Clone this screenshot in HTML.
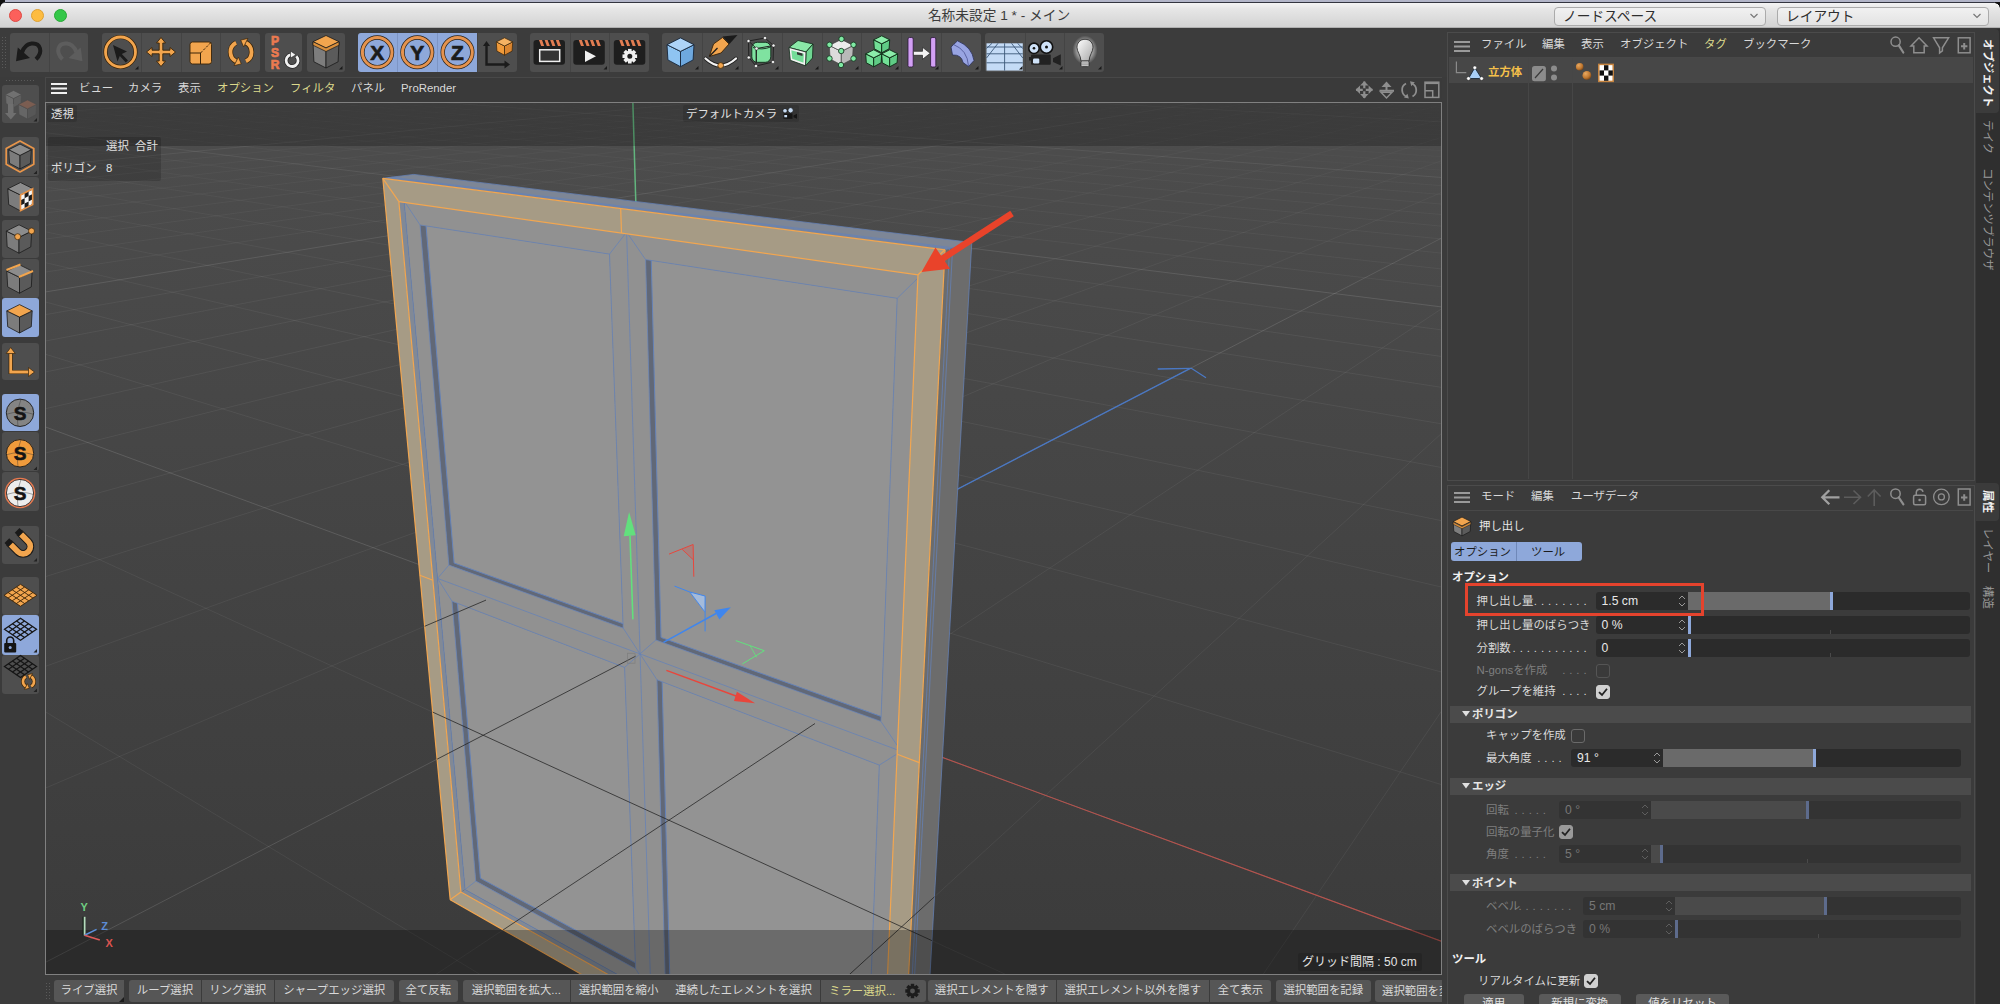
<!DOCTYPE html><html lang="ja"><head><meta charset="utf-8"><title>Cinema 4D</title><style>
*{box-sizing:border-box}
html,body{margin:0;padding:0}
body{width:2000px;height:1004px;overflow:hidden;background:#3b3b3b;position:relative;font-family:"Liberation Sans","Noto Sans CJK JP",sans-serif;font-size:11.4px;color:#d9d9d9;-webkit-font-smoothing:antialiased}
.abs{position:absolute}
.t{position:absolute;white-space:nowrap;line-height:16px;height:16px}
.tb{position:absolute;background:#4e4e4e;border-radius:3px}
.tbsep{position:absolute;width:1px;background:#444}
.hl{position:absolute;background:#8ea8da}
.y{color:#dcd98c}
.b{font-weight:bold;color:#f2f2f2}
.dis{color:#7f7f7f}
.fld{position:absolute;background:#2b2b2b;border-radius:3px 0 0 3px;height:18px;color:#e6e6e6;padding-left:6px;line-height:18px;font-size:12.2px}
.sld{position:absolute;background:#2b2b2b;height:18px;border-radius:0 3px 3px 0}
.fill{position:absolute;left:0;top:0;height:18px;background:#6a6a6a}
.hnd{position:absolute;top:0;width:3px;height:18px;background:#8ea8da}
.hdr{position:absolute;left:1450px;width:521px;height:17px;background:#4b4b4b}
.cb{position:absolute;width:14px;height:14px;border-radius:3px;border:1px solid #6a6a6a;background:#3a3a3a}
.cb.on{background:#d0d0d0;border-color:#d0d0d0}
.btn{position:absolute;background:#565656;height:22px;top:980px;line-height:21px;color:#d9d9d9;white-space:nowrap;text-align:center;overflow:hidden}
.vt{position:absolute;writing-mode:vertical-rl;text-orientation:sideways;white-space:nowrap;font-size:11.4px;line-height:25px;width:25px;color:#9a9a9a}
</style></head><body><div class="abs" style="left:0;top:0;width:2000px;height:4px;background:#b2b5c8"></div><div class="abs" style="left:0;top:1.8px;width:2000px;height:8px;background:#33353f;border-radius:6px 6px 0 0"></div><div class="abs" style="left:0;top:2.6px;width:2000px;height:25.4px;background:linear-gradient(#f4f4f4,#e6e6e6 25%,#d3d3d3);border-radius:5px 5px 0 0;border-bottom:1px solid #b0b0b0"></div><div class="abs" style="left:0;top:0;width:5px;height:7px;background:radial-gradient(circle at 5.5px 7.5px,transparent 5px,#101010 5.6px)"></div><div class="abs" style="left:1995px;top:1.5px;width:5px;height:6px;background:radial-gradient(circle at -0.5px 6.5px,transparent 5px,#101010 5.6px)"></div><div class="abs" style="left:9px;top:9px;width:13px;height:13px;border-radius:50%;background:#fc605b;border:0.5px solid #de4a43"></div><div class="abs" style="left:31.2px;top:9px;width:13px;height:13px;border-radius:50%;background:#fdbc40;border:0.5px solid #dea032"></div><div class="abs" style="left:53.8px;top:9px;width:13px;height:13px;border-radius:50%;background:#34c749;border:0.5px solid #27aa35"></div><div class="t" style="left:799px;width:400px;text-align:center;top:8.2px;font-size:13.7px;color:#3c3c3c">名称未設定 1 * - メイン</div><div class="abs" style="left:1554px;top:7px;width:212px;height:19px;border-radius:4px;background:linear-gradient(#f1f1f1,#e3e3e3);border:1px solid #ababab"></div><div class="t" style="left:1563px;top:8.5px;font-size:13.7px;color:#2e2e2e">ノードスペース</div><svg class="abs" style="left:1749px;top:12px" width="10" height="8"><path d="M1.5 2 L5 5.5 L8.5 2" fill="none" stroke="#777" stroke-width="1.2"/></svg><div class="abs" style="left:1777px;top:7px;width:212px;height:19px;border-radius:4px;background:linear-gradient(#f1f1f1,#e3e3e3);border:1px solid #ababab"></div><div class="t" style="left:1786px;top:8.5px;font-size:13.7px;color:#2e2e2e">レイアウト</div><svg class="abs" style="left:1972px;top:12px" width="10" height="8"><path d="M1.5 2 L5 5.5 L8.5 2" fill="none" stroke="#777" stroke-width="1.2"/></svg><div class="abs" style="left:0;top:29px;width:1447px;height:48px;background:#3c3c3c"></div><div class="abs" style="left:1px;top:36px;width:7px;height:32px;background-image:radial-gradient(circle,#5a5a5a 0.8px,transparent 1px);background-size:3px 3px"></div><div class="tb" style="left:10px;top:33px;width:78px;height:38.5px"></div><div class="tbsep" style="left:49px;top:33px;height:38.5px;background:#444"></div><div class="tb" style="left:101.7px;top:33px;width:158.3px;height:38.5px"></div><div class="tbsep" style="left:141.275px;top:33px;height:38.5px;background:#444"></div><div class="tbsep" style="left:180.85px;top:33px;height:38.5px;background:#444"></div><div class="tbsep" style="left:220.425px;top:33px;height:38.5px;background:#444"></div><div class="tb" style="left:264.6px;top:33px;width:37.8px;height:38.5px"></div><div class="tb" style="left:306.9px;top:33px;width:37.8px;height:38.5px"></div><div class="tb" style="left:357.5px;top:33px;width:159.8px;height:38.5px"></div><div class="hl" style="left:357.5px;top:33px;width:119.85px;height:38.5px;border-radius:3px 0 0 3px"></div><div class="tbsep" style="left:397.45px;top:33px;height:38.5px;background:#7d95c4"></div><div class="tbsep" style="left:437.4px;top:33px;height:38.5px;background:#7d95c4"></div><div class="tbsep" style="left:477.35px;top:33px;height:38.5px;background:#444"></div><div class="tb" style="left:530.3px;top:33px;width:118.3px;height:38.5px"></div><div class="tbsep" style="left:569.733px;top:33px;height:38.5px;background:#444"></div><div class="tbsep" style="left:609.167px;top:33px;height:38.5px;background:#444"></div><div class="tb" style="left:662px;top:33px;width:319px;height:38.5px"></div><div class="tbsep" style="left:701.875px;top:33px;height:38.5px;background:#444"></div><div class="tbsep" style="left:741.75px;top:33px;height:38.5px;background:#444"></div><div class="tbsep" style="left:781.625px;top:33px;height:38.5px;background:#444"></div><div class="tbsep" style="left:821.5px;top:33px;height:38.5px;background:#444"></div><div class="tbsep" style="left:861.375px;top:33px;height:38.5px;background:#444"></div><div class="tbsep" style="left:901.25px;top:33px;height:38.5px;background:#444"></div><div class="tbsep" style="left:941.125px;top:33px;height:38.5px;background:#444"></div><div class="tb" style="left:985px;top:33px;width:119px;height:38.5px"></div><div class="tbsep" style="left:1024.67px;top:33px;height:38.5px;background:#444"></div><div class="tbsep" style="left:1064.33px;top:33px;height:38.5px;background:#444"></div><svg class="abs" style="left:0;top:0" width="1447" height="78" viewBox="0 0 1447 78"><path d="M36 59.3 C43.5 52 40.5 42.5 31.5 43.5 C26.5 44 23.5 48 22 52.5" fill="none" stroke="#1b1b1b" stroke-width="4"/><polygon points="17.8,47.5 16,61.2 30,58" fill="#1b1b1b"/><path d="M62.5 59.3 C55 52 58 42.5 67 43.5 C72 44 75 48 76.5 52.5" fill="none" stroke="#5d5d5d" stroke-width="4"/><polygon points="80.7,47.5 82.5,61.2 68.5,58" fill="#5d5d5d"/><circle cx="120.5" cy="52" r="15" fill="none" stroke="#3a2408" stroke-width="4.2"/><circle cx="120.5" cy="52" r="15" fill="none" stroke="#f2a54e" stroke-width="2.8"/><polygon points="113,45 127,51.5 121.8,54 128,60.5 125.8,62.5 119.8,56 117.5,61.5" fill="#1b1b1b"/><path d="M138.5 69.5 L138.5 66 L135 69.5 Z" fill="#1a1a1a"/><path d="M161 37.5 L165.5 43 L162.8 43 L162.8 50.2 L170 50.2 L170 47.5 L175.5 52 L170 56.5 L170 53.8 L162.8 53.8 L162.8 61 L165.5 61 L161 66.5 L156.5 61 L159.2 61 L159.2 53.8 L152 53.8 L152 56.5 L146.5 52 L152 47.5 L152 50.2 L159.2 50.2 L159.2 43 L156.5 43 Z" fill="#f2a54e" stroke="#3a2408" stroke-width="0.9" stroke-linejoin="round"/><rect x="190" y="42" width="21.5" height="22" rx="2.5" fill="#f2a54e" stroke="#3a2408" stroke-width="0.9"/><path d="M190 53 L200.5 53 L200.5 64" fill="none" stroke="#3a2408" stroke-width="1"/><path d="M200.5 53 L211 42.5" stroke="#3a2408" stroke-width="1" stroke-dasharray="2.5 1.5"/><g transform="translate(482 0) scale(-1 1)"><path d="M245.9 42.7 A10.5 10.5 0 0 1 245.8 61.4" fill="none" stroke="#3a2408" stroke-width="5.2"/><path d="M245.9 42.7 A10.5 10.5 0 0 1 245.8 61.4" fill="none" stroke="#f2a54e" stroke-width="3.8"/><polygon points="247.9,65.6 243.6,57.1 240.7,63.9" fill="#f2a54e" stroke="#3a2408" stroke-width="0.7" stroke-linejoin="round"/><path d="M236.1 61.3 A10.5 10.5 0 0 1 236.2 42.6" fill="none" stroke="#3a2408" stroke-width="5.2"/><path d="M236.1 61.3 A10.5 10.5 0 0 1 236.2 42.6" fill="none" stroke="#f2a54e" stroke-width="3.8"/><polygon points="234.1,38.4 238.4,46.9 241.3,40.1" fill="#f2a54e" stroke="#3a2408" stroke-width="0.7" stroke-linejoin="round"/></g><text x="275" y="45" font-family="Liberation Sans,sans-serif" font-weight="bold" font-size="12" text-anchor="middle" fill="#ec7a50" stroke="#ec7a50" stroke-width="0.7">P</text><text x="275" y="57" font-family="Liberation Sans,sans-serif" font-weight="bold" font-size="12" text-anchor="middle" fill="#ec7a50" stroke="#ec7a50" stroke-width="0.7">S</text><text x="275" y="69" font-family="Liberation Sans,sans-serif" font-weight="bold" font-size="12" text-anchor="middle" fill="#ec7a50" stroke="#ec7a50" stroke-width="0.7">R</text><path d="M296.3 56.2 A6 6 0 1 1 291 54.6" fill="none" stroke="#222" stroke-width="4.2"/><path d="M296.3 56.2 A6 6 0 1 1 291 54.6" fill="none" stroke="#f2f2f2" stroke-width="2.8"/><polygon points="290.5,51 296,54.8 290.5,58" fill="#f2f2f2" stroke="#222" stroke-width="0.6"/><polygon points="313.0,41.7 326.0,48.0 326.0,68.0 313.9,61.8" fill="#7d7d7d" stroke="#1a1a1a" stroke-width="0.8" stroke-linejoin="round"/><polygon points="326.0,48.0 339.0,41.7 338.1,61.8 326.0,68.0" fill="#5b5b5b" stroke="#1a1a1a" stroke-width="0.8" stroke-linejoin="round"/><polygon points="326.0,35.5 339.0,41.7 326.0,48.0 313.0,41.7" fill="#f2a54e" stroke="#1a1a1a" stroke-width="0.8" stroke-linejoin="round"/><polygon points="313,41.74 326,47.98 339,41.74 339,45.2 326,51.5 313,45.2" fill="#d98f3c" stroke="#1a1a1a" stroke-width="0.7"/><path d="M342.5 69.5 L342.5 66 L339 69.5 Z" fill="#1a1a1a"/><circle cx="377.2" cy="52.3" r="14.8" fill="none" stroke="#2b2218" stroke-width="4.4"/><circle cx="377.2" cy="52.3" r="14.8" fill="none" stroke="#e4934f" stroke-width="3"/><text x="377.2" y="60.2" font-family="Liberation Sans,sans-serif" font-weight="bold" font-size="21" text-anchor="middle" fill="#1b1b1b" stroke="#1b1b1b" stroke-width="0.7">X</text><circle cx="417.3" cy="52.3" r="14.8" fill="none" stroke="#2b2218" stroke-width="4.4"/><circle cx="417.3" cy="52.3" r="14.8" fill="none" stroke="#e4934f" stroke-width="3"/><text x="417.3" y="60.2" font-family="Liberation Sans,sans-serif" font-weight="bold" font-size="21" text-anchor="middle" fill="#1b1b1b" stroke="#1b1b1b" stroke-width="0.7">Y</text><circle cx="457.5" cy="52.3" r="14.8" fill="none" stroke="#2b2218" stroke-width="4.4"/><circle cx="457.5" cy="52.3" r="14.8" fill="none" stroke="#e4934f" stroke-width="3"/><text x="457.5" y="60.2" font-family="Liberation Sans,sans-serif" font-weight="bold" font-size="21" text-anchor="middle" fill="#1b1b1b" stroke="#1b1b1b" stroke-width="0.7">Z</text><path d="M486.5 44 L486.5 64.5 L506 64.5" fill="none" stroke="#1b1b1b" stroke-width="2.4"/><polygon points="483,46 486.5,41 490,46" fill="#1b1b1b"/><polygon points="504.5,60.5 510,64.5 504.5,68.5" fill="#1b1b1b"/><polygon points="496.3,41.9 504.5,46.0 504.5,55.2 496.9,51.1" fill="#f09a3a" stroke="#3a2408" stroke-width="0.7" stroke-linejoin="round"/><polygon points="504.5,46.0 512.7,41.9 512.1,51.1 504.5,55.2" fill="#dc8630" stroke="#3a2408" stroke-width="0.7" stroke-linejoin="round"/><polygon points="504.5,37.8 512.7,41.9 504.5,46.0 496.3,41.9" fill="#f5b263" stroke="#3a2408" stroke-width="0.7" stroke-linejoin="round"/><rect x="533.5" y="40" width="31.5" height="24.8" rx="3" fill="#1e1e1e"/><polygon points="539,40 542,40 544.2,46 541.2,46" fill="#e27d52"/><polygon points="544.6,40 547.6,40 549.8,46 546.8,46" fill="#e27d52"/><polygon points="550.2,40 553.2,40 555.4,46 552.4,46" fill="#e27d52"/><polygon points="555.8,40 558.8,40 561,46 558,46" fill="#e27d52"/><rect x="573.3" y="40" width="31.5" height="24.8" rx="3" fill="#1e1e1e"/><polygon points="578.8,40 581.8,40 584,46 581,46" fill="#e27d52"/><polygon points="584.4,40 587.4,40 589.6,46 586.6,46" fill="#e27d52"/><polygon points="590,40 593,40 595.2,46 592.2,46" fill="#e27d52"/><polygon points="595.6,40 598.6,40 600.8,46 597.8,46" fill="#e27d52"/><rect x="613.8" y="40" width="31.5" height="24.8" rx="3" fill="#1e1e1e"/><polygon points="619.3,40 622.3,40 624.5,46 621.5,46" fill="#e27d52"/><polygon points="624.9,40 627.9,40 630.1,46 627.1,46" fill="#e27d52"/><polygon points="630.5,40 633.5,40 635.7,46 632.7,46" fill="#e27d52"/><polygon points="636.1,40 639.1,40 641.3,46 638.3,46" fill="#e27d52"/><rect x="539.7" y="49.8" width="20" height="11.6" fill="#333" stroke="#f0f0f0" stroke-width="1.5"/><polygon points="585,50.5 585,62 596,56.2" fill="#f0f0f0"/><path d="M607 69.5 L607 66 L603.5 69.5 Z" fill="#1a1a1a"/><rect x="-1.8" y="-7.3" width="3.6" height="4" fill="#f0f0f0" transform="translate(629.8 56.2) rotate(0)"/><rect x="-1.8" y="-7.3" width="3.6" height="4" fill="#f0f0f0" transform="translate(629.8 56.2) rotate(45)"/><rect x="-1.8" y="-7.3" width="3.6" height="4" fill="#f0f0f0" transform="translate(629.8 56.2) rotate(90)"/><rect x="-1.8" y="-7.3" width="3.6" height="4" fill="#f0f0f0" transform="translate(629.8 56.2) rotate(135)"/><rect x="-1.8" y="-7.3" width="3.6" height="4" fill="#f0f0f0" transform="translate(629.8 56.2) rotate(180)"/><rect x="-1.8" y="-7.3" width="3.6" height="4" fill="#f0f0f0" transform="translate(629.8 56.2) rotate(225)"/><rect x="-1.8" y="-7.3" width="3.6" height="4" fill="#f0f0f0" transform="translate(629.8 56.2) rotate(270)"/><rect x="-1.8" y="-7.3" width="3.6" height="4" fill="#f0f0f0" transform="translate(629.8 56.2) rotate(315)"/><circle cx="629.8" cy="56.2" r="4.1" fill="none" stroke="#f0f0f0" stroke-width="3.2"/><polygon points="667.0,44.7 680.5,51.4 680.5,66.7 667.9,59.9" fill="#8fc4f2" stroke="#16263a" stroke-width="0.9" stroke-linejoin="round"/><polygon points="680.5,51.4 694.0,44.7 693.1,59.9 680.5,66.7" fill="#6ea8de" stroke="#16263a" stroke-width="0.9" stroke-linejoin="round"/><polygon points="680.5,37.9 694.0,44.7 680.5,51.4 667.0,44.7" fill="#add3f7" stroke="#16263a" stroke-width="0.9" stroke-linejoin="round"/><path d="M698.5 69.5 L698.5 66 L695 69.5 Z" fill="#1a1a1a"/><polygon points="722.5,36.5 737.5,35 729.5,44 " fill="#1b1b1b"/><polygon points="713.5,44 722.5,37.5 729,44 721,53 709.3,56.5" fill="#f2a54e" stroke="#3a2408" stroke-width="0.9" stroke-linejoin="round"/><path d="M717.5 48 L709.5 56.3" stroke="#1b1b1b" stroke-width="1.3"/><path d="M705.5 58.5 Q720.5 72.5 736 58.5" fill="none" stroke="#222" stroke-width="3.8" stroke-linecap="round"/><path d="M705.5 58.5 Q720.5 72.5 736 58.5" fill="none" stroke="#f4f4f4" stroke-width="2.3" stroke-linecap="round"/><circle cx="720.7" cy="65.5" r="2.9" fill="#f2a54e" stroke="#3a2408" stroke-width="0.8"/><path d="M738.5 69.5 L738.5 66 L735 69.5 Z" fill="#1a1a1a"/><rect x="751.8" y="42.3" width="19" height="20" rx="5.5" fill="#7fe2a0" stroke="#0f2a18" stroke-width="0.9"/><path d="M753 47.5 Q762 50.5 770.5 47" fill="none" stroke="#0f2a18" stroke-width="0.9"/><path d="M756 49 L756.5 62" fill="none" stroke="#0f2a18" stroke-width="0.9"/><polygon points="748.5,41 765,38 773.5,45.5 773,62 756,66 748.8,57.5" fill="none" stroke="#222" stroke-width="1"/><path d="M748.5 41 L756.5 48.5 L773.5 45.5 M756.5 48.5 L756 66" fill="none" stroke="#222" stroke-width="1"/><circle cx="748.5" cy="41" r="1.6" fill="#f4f4f4" stroke="#222" stroke-width="0.5"/><circle cx="765" cy="38" r="1.6" fill="#f4f4f4" stroke="#222" stroke-width="0.5"/><circle cx="773.5" cy="45.5" r="1.6" fill="#f4f4f4" stroke="#222" stroke-width="0.5"/><circle cx="773" cy="62" r="1.6" fill="#f4f4f4" stroke="#222" stroke-width="0.5"/><circle cx="756" cy="66" r="1.6" fill="#f4f4f4" stroke="#222" stroke-width="0.5"/><circle cx="748.8" cy="57.5" r="1.6" fill="#f4f4f4" stroke="#222" stroke-width="0.5"/><circle cx="756.5" cy="48.5" r="1.6" fill="#f4f4f4" stroke="#222" stroke-width="0.5"/><path d="M778.5 69.5 L778.5 66 L775 69.5 Z" fill="#1a1a1a"/><polygon points="789,47.5 798,40.5 813,44 806,52" fill="#8ae8a8" stroke="#0f2a18" stroke-width="0.8"/><polygon points="806,52 813,44 812.5,58 805.5,65.8" fill="#6fd692" stroke="#0f2a18" stroke-width="0.8"/><polygon points="789,47.5 806,52 805.5,65.8 790.3,60.3" fill="#f2f2f2" stroke="#0f2a18" stroke-width="0.8"/><polygon points="791.3,50.3 803.8,53.7 803.5,62.8 792.2,58.8" fill="#74dc98"/><polygon points="797,52 802.5,53.5 802.5,56 797,54.5" fill="#333"/><path d="M818.5 69.5 L818.5 66 L815 69.5 Z" fill="#1a1a1a"/><polygon points="829.3,45.4 841.3,51.4 841.3,65.0 830.1,59.0" fill="#dcdcdc" stroke="#444" stroke-width="0.7" stroke-linejoin="round"/><polygon points="841.3,51.4 853.3,45.4 852.5,59.0 841.3,65.0" fill="#b9b9b9" stroke="#444" stroke-width="0.7" stroke-linejoin="round"/><polygon points="841.3,39.4 853.3,45.4 841.3,51.4 829.3,45.4" fill="#ececec" stroke="#444" stroke-width="0.7" stroke-linejoin="round"/><circle cx="841.5" cy="39" r="2.7" fill="#7fe9a3" stroke="#0f2a18" stroke-width="0.8"/><circle cx="829.5" cy="44.8" r="2.7" fill="#7fe9a3" stroke="#0f2a18" stroke-width="0.8"/><circle cx="853.5" cy="44.8" r="2.7" fill="#7fe9a3" stroke="#0f2a18" stroke-width="0.8"/><circle cx="841.2" cy="51" r="2.7" fill="#7fe9a3" stroke="#0f2a18" stroke-width="0.8"/><circle cx="829.5" cy="58.5" r="2.7" fill="#7fe9a3" stroke="#0f2a18" stroke-width="0.8"/><circle cx="853.5" cy="58.5" r="2.7" fill="#7fe9a3" stroke="#0f2a18" stroke-width="0.8"/><circle cx="841" cy="65" r="2.7" fill="#7fe9a3" stroke="#0f2a18" stroke-width="0.8"/><path d="M858.5 69.5 L858.5 66 L855 69.5 Z" fill="#1a1a1a"/><polygon points="873.7,39.8 881.7,43.8 881.7,52.8 874.3,48.8" fill="#72df96" stroke="#0c2a14" stroke-width="0.9" stroke-linejoin="round"/><polygon points="881.7,43.8 889.7,39.8 889.1,48.8 881.7,52.8" fill="#5fcc85" stroke="#0c2a14" stroke-width="0.9" stroke-linejoin="round"/><polygon points="881.7,35.8 889.7,39.8 881.7,43.8 873.7,39.8" fill="#8bedaa" stroke="#0c2a14" stroke-width="0.9" stroke-linejoin="round"/><polygon points="865.7,53.8 873.7,57.8 873.7,66.8 866.3,62.8" fill="#72df96" stroke="#0c2a14" stroke-width="0.9" stroke-linejoin="round"/><polygon points="873.7,57.8 881.7,53.8 881.1,62.8 873.7,66.8" fill="#5fcc85" stroke="#0c2a14" stroke-width="0.9" stroke-linejoin="round"/><polygon points="873.7,49.8 881.7,53.8 873.7,57.8 865.7,53.8" fill="#8bedaa" stroke="#0c2a14" stroke-width="0.9" stroke-linejoin="round"/><polygon points="881.7,53.8 889.7,57.8 889.7,66.8 882.3,62.8" fill="#72df96" stroke="#0c2a14" stroke-width="0.9" stroke-linejoin="round"/><polygon points="889.7,57.8 897.7,53.8 897.1,62.8 889.7,66.8" fill="#5fcc85" stroke="#0c2a14" stroke-width="0.9" stroke-linejoin="round"/><polygon points="889.7,49.8 897.7,53.8 889.7,57.8 881.7,53.8" fill="#8bedaa" stroke="#0c2a14" stroke-width="0.9" stroke-linejoin="round"/><path d="M898.5 69.5 L898.5 66 L895 69.5 Z" fill="#1a1a1a"/><rect x="908" y="37.5" width="5.2" height="29.5" rx="1.5" fill="#d3a0f5" stroke="#2a1838" stroke-width="0.8"/><rect x="930.6" y="37.5" width="5.2" height="29.5" rx="1.5" fill="#d3a0f5" stroke="#2a1838" stroke-width="0.8"/><polygon points="913.4,51.3 922.5,51.3 922.5,47.3 930.2,53.3 922.5,59.3 922.5,55.3 913.4,55.3" fill="#f2f2f2" stroke="#222" stroke-width="0.7"/><path d="M938.5 69.5 L938.5 66 L935 69.5 Z" fill="#1a1a1a"/><path d="M951 47 L957.5 40.8 Q972 47 974 60.5 L968.5 66.5 L963 62.5 Q961.5 54.5 952.5 55 Z" fill="#98a4e2" stroke="#2a2f55" stroke-width="0.8" stroke-linejoin="round"/><path d="M953.5 44.5 Q967.5 50 968.5 66" fill="none" stroke="#4a5290" stroke-width="0.8"/><path d="M978.5 69.5 L978.5 66 L975 69.5 Z" fill="#1a1a1a"/><rect x="986.5" y="43.3" width="36.3" height="27.3" fill="#c4dbf6"/><path d="M986.5 47 H1022.8 M986.5 53.8 H1022.8 M986.5 62.8 H1022.8 M1004.6 43.3 V70.6 M998 43.3 L986.5 58 M1011.5 43.3 L1022.8 58 M992 43.3 L986.5 48.5 M1017.5 43.3 L1022.8 48.5" fill="none" stroke="#3c5878" stroke-width="0.9"/><path d="M1022.5 69.5 L1022.5 66 L1019 69.5 Z" fill="#1a1a1a"/><rect x="1031" y="54.5" width="19.8" height="10.3" rx="1" fill="#222"/><rect x="1029" y="57" width="3" height="3.5" fill="#222"/><polygon points="1053,58.3 1060.8,54.3 1060.8,65.6 1053,62" fill="#222"/><circle cx="1034" cy="48.3" r="5.2" fill="#cfe2f8" stroke="#111" stroke-width="1.6"/><circle cx="1034" cy="48.3" r="1.3" fill="#111"/><circle cx="1046.5" cy="47" r="6.2" fill="#cfe2f8" stroke="#111" stroke-width="1.6"/><circle cx="1046.5" cy="47" r="1.5" fill="#111"/><rect x="1033" y="58.5" width="6.3" height="5" rx="1.2" fill="#cfe2f8"/><path d="M1062.5 69.5 L1062.5 66 L1059 69.5 Z" fill="#1a1a1a"/><defs><radialGradient id="glow"><stop offset="0.55" stop-color="#fff" stop-opacity="0.55"/><stop offset="1" stop-color="#fff" stop-opacity="0"/></radialGradient><linearGradient id="bulbg" x1="0" y1="0" x2="1" y2="1"><stop offset="0" stop-color="#fff"/><stop offset="1" stop-color="#a8a8a8"/></linearGradient></defs><ellipse cx="1085" cy="50" rx="12.5" ry="14.5" fill="url(#glow)"/><path d="M1085 39.3 C1090.5 39.3 1093 43.5 1093 47.3 C1093 52 1089.3 55 1089 61 L1081 61 C1080.7 55 1077 52 1077 47.3 C1077 43.5 1079.5 39.3 1085 39.3 Z" fill="url(#bulbg)" stroke="#222" stroke-width="0.8"/><rect x="1081" y="61" width="8" height="5.6" rx="1.2" fill="#d8d8d8" stroke="#222" stroke-width="0.7"/><path d="M1081 63 H1089 M1081 64.8 H1089" stroke="#666" stroke-width="0.6"/><path d="M1101.5 69.5 L1101.5 66 L1098 69.5 Z" fill="#1a1a1a"/></svg><div class="abs" style="left:5px;top:79px;width:31px;height:4px;background-image:radial-gradient(circle,#5a5a5a 0.8px,transparent 1px);background-size:3px 3px"></div><div class="tb" style="left:1.5px;top:85px;width:37.5px;height:38px;"></div><div class="tb" style="left:1.5px;top:137.3px;width:37.5px;height:39.2px;"></div><div class="tb" style="left:1.5px;top:177px;width:37.5px;height:38.5px;"></div><div class="tb" style="left:1.5px;top:220px;width:37.5px;height:38px;"></div><div class="tb" style="left:1.5px;top:258.5px;width:37.5px;height:39px;"></div><div class="hl" style="left:1.5px;top:298px;width:37.5px;height:39.3px;border-radius:3px;"></div><div class="tb" style="left:1.5px;top:342.7px;width:37.5px;height:37.7px;"></div><div class="hl" style="left:1.5px;top:393.8px;width:37.5px;height:37.7px;border-radius:3px;"></div><div class="tb" style="left:1.5px;top:432px;width:37.5px;height:39px;"></div><div class="tb" style="left:1.5px;top:471.5px;width:37.5px;height:39.8px;"></div><div class="tb" style="left:1.5px;top:526px;width:37.5px;height:37.5px;"></div><div class="tb" style="left:1.5px;top:576.5px;width:37.5px;height:38.1px;"></div><div class="hl" style="left:1.5px;top:615px;width:37.5px;height:39.7px;border-radius:3px;"></div><div class="tb" style="left:1.5px;top:655px;width:37.5px;height:38.9px;"></div><svg class="abs" style="left:0;top:78px" width="44" height="640" viewBox="0 78 44 640"><g opacity="0.55"><polygon points="5.5,94.5 13.5,98.5 13.5,107.5 6.1,103.5" fill="#858585" stroke="#4a4a4a" stroke-width="0.6" stroke-linejoin="round"/><polygon points="13.5,98.5 21.5,94.5 20.9,103.5 13.5,107.5" fill="#6c6c6c" stroke="#4a4a4a" stroke-width="0.6" stroke-linejoin="round"/><polygon points="13.5,90.5 21.5,94.5 13.5,98.5 5.5,94.5" fill="#8f8f8f" stroke="#4a4a4a" stroke-width="0.6" stroke-linejoin="round"/><path d="M8 104 L13.5 104 L13.5 113 L16.5 113 L10.8 119.5 L5 113 L8 113 Z" fill="#8a8a8a"/><polygon points="18.5,104.4 27.5,108.9 27.5,119.1 19.1,114.6" fill="#7a7a7a" stroke="#4a4a4a" stroke-width="0.6" stroke-linejoin="round"/><polygon points="27.5,108.9 36.5,104.4 35.9,114.6 27.5,119.1" fill="#606060" stroke="#4a4a4a" stroke-width="0.6" stroke-linejoin="round"/><polygon points="27.5,99.9 36.5,104.4 27.5,108.9 18.5,104.4" fill="#a06a55" stroke="#4a4a4a" stroke-width="0.6" stroke-linejoin="round"/></g><path d="M37 121.5 L37 118 L33.5 121.5 Z" fill="#222"/><polygon points="8.7,149.7 20.0,155.4 20.0,168.9 9.5,163.3" fill="#7c7c7c" stroke="#1a1a1a" stroke-width="0.8" stroke-linejoin="round"/><polygon points="20.0,155.4 31.3,149.7 30.5,163.3 20.0,168.9" fill="#5a5a5a" stroke="#1a1a1a" stroke-width="0.8" stroke-linejoin="round"/><polygon points="20.0,144.1 31.3,149.7 20.0,155.4 8.7,149.7" fill="#8c8c8c" stroke="#1a1a1a" stroke-width="0.8" stroke-linejoin="round"/><polygon points="20,141 33.8,148.6 33.8,164.2 20,172 6.2,164.2 6.2,148.6" fill="none" stroke="#e8954a" stroke-width="1.7" stroke-linejoin="round"/><path d="M37 174 L37 170.5 L33.5 174 Z" fill="#222"/><polygon points="7.8,188.8 20.5,195.0 20.5,210.9 8.7,204.6" fill="#7c7c7c" stroke="#1a1a1a" stroke-width="0.8" stroke-linejoin="round"/><polygon points="20.5,195.0 33.2,188.8 32.3,204.6 20.5,210.9" fill="#f4f4f4" stroke="#1a1a1a" stroke-width="0.8" stroke-linejoin="round"/><polygon points="20.5,182.5 33.2,188.8 20.5,195.0 7.8,188.8" fill="#8c8c8c" stroke="#1a1a1a" stroke-width="0.8" stroke-linejoin="round"/><polygon points="20.5,200.3 24.6,198.2 24.6,203.5 20.5,205.5" fill="#1a1a1a"/><polygon points="24.6,192.9 28.6,190.9 28.6,196.1 24.6,198.2" fill="#1a1a1a"/><polygon points="24.6,203.5 28.6,201.4 28.6,206.7 24.6,208.7" fill="#1a1a1a"/><polygon points="28.6,196.1 32.7,194.1 32.7,199.3 28.6,201.4" fill="#1a1a1a"/><polygon points="20.5,195.0 32.7,188.8 32.7,204.6 20.5,210.8" fill="none" stroke="#e8954a" stroke-width="1.6"/><polygon points="6.3,231.1 19.0,237.3 19.0,253.2 7.2,246.9" fill="#7c7c7c" stroke="#1a1a1a" stroke-width="0.8" stroke-linejoin="round"/><polygon points="19.0,237.3 31.7,231.1 30.8,246.9 19.0,253.2" fill="#5a5a5a" stroke="#1a1a1a" stroke-width="0.8" stroke-linejoin="round"/><polygon points="19.0,224.8 31.7,231.1 19.0,237.3 6.3,231.1" fill="#8c8c8c" stroke="#1a1a1a" stroke-width="0.8" stroke-linejoin="round"/><circle cx="17.7" cy="236.7" r="3" fill="#f2a54e" stroke="#3a2408" stroke-width="0.7"/><circle cx="31.5" cy="231" r="3" fill="#f2a54e" stroke="#3a2408" stroke-width="0.7"/><polygon points="6.8,271.1 19.5,277.3 19.5,293.2 7.7,286.9" fill="#7c7c7c" stroke="#1a1a1a" stroke-width="0.8" stroke-linejoin="round"/><polygon points="19.5,277.3 32.2,271.1 31.3,286.9 19.5,293.2" fill="#5a5a5a" stroke="#1a1a1a" stroke-width="0.8" stroke-linejoin="round"/><polygon points="19.5,264.8 32.2,271.1 19.5,277.3 6.8,271.1" fill="#8c8c8c" stroke="#1a1a1a" stroke-width="0.8" stroke-linejoin="round"/><path d="M6.5 270 L20.5 264.5 M19 277 L33 271" stroke="#f2a54e" stroke-width="2"/><polygon points="6.8,310.9 19.5,317.1 19.5,333.0 7.7,326.7" fill="#7c7c7c" stroke="#1a1a1a" stroke-width="0.8" stroke-linejoin="round"/><polygon points="19.5,317.1 32.2,310.9 31.3,326.7 19.5,333.0" fill="#5a5a5a" stroke="#1a1a1a" stroke-width="0.8" stroke-linejoin="round"/><polygon points="19.5,304.6 32.2,310.9 19.5,317.1 6.8,310.9" fill="#f2a54e" stroke="#1a1a1a" stroke-width="0.8" stroke-linejoin="round"/><path d="M10.7 352 L10.7 372 L30 372" fill="none" stroke="#3a2408" stroke-width="4.2"/><path d="M10.7 352 L10.7 372 L30 372" fill="none" stroke="#f2a54e" stroke-width="2.8"/><polygon points="6.2,353.5 10.7,347.5 15.2,353.5" fill="#f2a54e" stroke="#3a2408" stroke-width="0.7"/><polygon points="28.5,367.5 34.5,372 28.5,376.5" fill="#f2a54e" stroke="#3a2408" stroke-width="0.7"/><circle cx="20" cy="412.8" r="13.7" fill="#848484" stroke="#1a1a1a" stroke-width="0.9"/><path d="M6.3 414.3 Q20 409.8 33.7 414.3 M21 399.1 Q16 412.8 18 426.5" fill="none" stroke="#333" stroke-opacity="0.6" stroke-width="0.7"/><text x="20" y="419.6" font-family="Liberation Sans,sans-serif" font-weight="bold" font-size="19" text-anchor="middle" fill="#141414" stroke="#141414" stroke-width="0.6">S</text><circle cx="20" cy="453.3" r="13.7" fill="#f09b3c" stroke="#1a1a1a" stroke-width="0.9"/><path d="M6.3 454.8 Q20 450.3 33.7 454.8 M21 439.6 Q16 453.3 18 467" fill="none" stroke="#333" stroke-opacity="0.6" stroke-width="0.7"/><text x="20" y="460.1" font-family="Liberation Sans,sans-serif" font-weight="bold" font-size="19" text-anchor="middle" fill="#141414" stroke="#141414" stroke-width="0.6">S</text><path d="M37 470 L37 466.5 L33.5 470 Z" fill="#222"/><circle cx="20" cy="493" r="15.3" fill="#e87a50"/><circle cx="20" cy="493" r="13.6" fill="#ececec" stroke="#1a1a1a" stroke-width="0.8"/><path d="M6.4 494.5 Q20 490 33.6 494.5 M21 479.4 Q16 493 18 506.6" fill="none" stroke="#333" stroke-opacity="0.6" stroke-width="0.7"/><text x="20" y="499.8" font-family="Liberation Sans,sans-serif" font-weight="bold" font-size="19" text-anchor="middle" fill="#141414" stroke="#141414" stroke-width="0.6">S</text><g transform="translate(21.5 545) rotate(-45) scale(1.12)"><path d="M-9.5 -9 L-9.5 2 A9.5 9.5 0 0 0 9.5 2 L9.5 -9 L3.5 -9 L3.5 2 A3.5 3.5 0 0 1 -3.5 2 L-3.5 -9 Z" fill="#f2a54e" stroke="#1a1a1a" stroke-width="0.9"/><rect x="-9.5" y="-12" width="6" height="5" fill="#1a1a1a"/><rect x="3.5" y="-12" width="6" height="5" fill="#1a1a1a"/></g><path d="M37 561.5 L37 558 L33.5 561.5 Z" fill="#222"/><polygon points="20.5,584.3 37,595.3 20.5,606.3 4,595.3" fill="#f2a54e" stroke="#3a2408" stroke-width="0.9"/><line x1="24.6" y1="587.0" x2="8.1" y2="598.0" stroke="#3a2408" stroke-width="0.9"/><line x1="16.4" y1="587.0" x2="32.9" y2="598.0" stroke="#3a2408" stroke-width="0.9"/><line x1="28.8" y1="589.8" x2="12.2" y2="600.8" stroke="#3a2408" stroke-width="0.9"/><line x1="12.2" y1="589.8" x2="28.8" y2="600.8" stroke="#3a2408" stroke-width="0.9"/><line x1="32.9" y1="592.5" x2="16.4" y2="603.5" stroke="#3a2408" stroke-width="0.9"/><line x1="8.1" y1="592.5" x2="24.6" y2="603.5" stroke="#3a2408" stroke-width="0.9"/><polygon points="20.5,618.2 36.5,629.2 20.5,640.2 4.5,629.2" fill="none" stroke="#151515" stroke-width="1.3"/><line x1="24.5" y1="621.0" x2="8.5" y2="632.0" stroke="#151515" stroke-width="1.3"/><line x1="16.5" y1="621.0" x2="32.5" y2="632.0" stroke="#151515" stroke-width="1.3"/><line x1="28.5" y1="623.7" x2="12.5" y2="634.7" stroke="#151515" stroke-width="1.3"/><line x1="12.5" y1="623.7" x2="28.5" y2="634.7" stroke="#151515" stroke-width="1.3"/><line x1="32.5" y1="626.5" x2="16.5" y2="637.5" stroke="#151515" stroke-width="1.3"/><line x1="8.5" y1="626.5" x2="24.5" y2="637.5" stroke="#151515" stroke-width="1.3"/><rect x="4.2" y="643" width="12" height="9.5" rx="1" fill="#151515"/><path d="M6.7 643 V640.5 A3.5 3.5 0 0 1 13.7 640.5 V643" fill="none" stroke="#151515" stroke-width="1.6"/><circle cx="10.2" cy="647.5" r="1.5" fill="#8ea8da"/><path d="M37 652.5 L37 649 L33.5 652.5 Z" fill="#222"/><polygon points="20.5,655.5 36.5,666.5 20.5,677.5 4.5,666.5" fill="none" stroke="#151515" stroke-width="1.3"/><line x1="24.5" y1="658.2" x2="8.5" y2="669.2" stroke="#151515" stroke-width="1.3"/><line x1="16.5" y1="658.2" x2="32.5" y2="669.2" stroke="#151515" stroke-width="1.3"/><line x1="28.5" y1="661.0" x2="12.5" y2="672.0" stroke="#151515" stroke-width="1.3"/><line x1="12.5" y1="661.0" x2="28.5" y2="672.0" stroke="#151515" stroke-width="1.3"/><line x1="32.5" y1="663.8" x2="16.5" y2="674.8" stroke="#151515" stroke-width="1.3"/><line x1="8.5" y1="663.8" x2="24.5" y2="674.8" stroke="#151515" stroke-width="1.3"/><g transform="translate(57 0) scale(-1 1)"><path d="M31.1 676.6 A5.6 5.6 0 0 1 31.0 686.5" fill="none" stroke="#3a2408" stroke-width="4"/><path d="M31.1 676.6 A5.6 5.6 0 0 1 31.0 686.5" fill="none" stroke="#f2a54e" stroke-width="2.6"/><polygon points="32.5,689.4 29.6,683.6 27.6,688.3" fill="#f2a54e" stroke="#3a2408" stroke-width="0.7" stroke-linejoin="round"/><path d="M25.9 686.4 A5.6 5.6 0 0 1 26.0 676.5" fill="none" stroke="#3a2408" stroke-width="4"/><path d="M25.9 686.4 A5.6 5.6 0 0 1 26.0 676.5" fill="none" stroke="#f2a54e" stroke-width="2.6"/><polygon points="24.5,673.6 27.4,679.4 29.4,674.7" fill="#f2a54e" stroke="#3a2408" stroke-width="0.7" stroke-linejoin="round"/></g><path d="M37 692 L37 688.5 L33.5 692 Z" fill="#222"/></svg><div class="abs" style="left:45px;top:77px;width:1397px;height:25px;background:#3a3a3a;border-top:1px solid #484848;border-left:1px solid #484848"></div><div class="abs" style="left:51px;top:83px;width:16px;height:2px;background:#f0f0f0;box-shadow:0 4.5px 0 #f0f0f0,0 9px 0 #f0f0f0"></div><div class="t " style="left:79px;top:80px;">ビュー</div><div class="t " style="left:128px;top:80px;">カメラ</div><div class="t " style="left:178px;top:80px;">表示</div><div class="t y" style="left:217px;top:80px;">オプション</div><div class="t y" style="left:290px;top:80px;">フィルタ</div><div class="t " style="left:351px;top:80px;">パネル</div><div class="t " style="left:401px;top:80px;">ProRender</div><svg class="abs" style="left:1350px;top:78px" width="96" height="24" viewBox="1350 78 96 24"><path d="M1364.3 81.6 v16.4 M1356.1 89.8 h16.4" stroke="#8e8e8e" stroke-width="2.2" fill="none"/><polygon points="1364.3,81.2 1368.5,85.5 1360.1,85.5" fill="#8e8e8e"/><polygon points="1364.3,98.4 1360.1,94.1 1368.5,94.1" fill="#8e8e8e"/><polygon points="1355.7,89.8 1360.0,85.6 1360.0,94.0" fill="#8e8e8e"/><polygon points="1372.9,89.8 1368.6,94.0 1368.6,85.6" fill="#8e8e8e"/><rect x="1362.8" y="88.3" width="3" height="3" fill="#3a3a3a"/><polygon points="1386.5,81.5 1391.5,87 1381.5,87" fill="#8e8e8e"/><path d="M1386.5 86 V90.5 M1379.5 90.7 H1394" stroke="#8e8e8e" stroke-width="2" fill="none"/><path d="M1381 92.3 L1392 92.3 L1386.5 98 Z" fill="none" stroke="#8e8e8e" stroke-width="1.5"/><path d="M1406 83.5 A7.3 7.3 0 0 0 1407.5 97" fill="none" stroke="#8e8e8e" stroke-width="1.8"/><path d="M1412.5 96.5 A7.3 7.3 0 0 0 1412 83.5" fill="none" stroke="#8e8e8e" stroke-width="1.8"/><polygon points="1410,81.3 1414.8,82.3 1411.3,86.2" fill="#8e8e8e"/><polygon points="1408.8,98.5 1404,97.6 1407.5,93.7" fill="#8e8e8e"/><rect x="1425" y="82.2" width="13.8" height="15.2" fill="none" stroke="#8e8e8e" stroke-width="1.5"/><path d="M1425 90.8 H1432.7 V97.4" fill="none" stroke="#8e8e8e" stroke-width="1.5"/><path d="M1425 83.3 H1438.8" stroke="#8e8e8e" stroke-width="1.6"/></svg><div class="abs" style="left:45px;top:102px;width:1397px;height:873px;background:#808080"></div><svg width="2000" height="1004" viewBox="0 0 2000 1004" style="position:absolute;left:0;top:0">
<defs><linearGradient id="vbg" x1="0" y1="0" x2="0" y2="1"><stop offset="0" stop-color="#4d4d4d"/><stop offset="1" stop-color="#3b3b3b"/></linearGradient>
<clipPath id="vclip"><rect x="46" y="103" width="1395" height="871"/></clipPath>
<clipPath id="doorclip"><polygon points="382.8,178.3 413.8,174.4 971.8,242.5 921.1,1131.0 899.6,1155.4 450.2,899.7"/></clipPath>
<clipPath id="opUL"><polygon points="420.1,225.0 609.5,254.1 623.2,628.1 448.9,565.1"/></clipPath>
<clipPath id="opUR"><polygon points="645.6,259.6 897.2,298.3 880.9,721.4 655.9,640.0"/></clipPath>
<clipPath id="opLL"><polygon points="452.0,601.2 624.6,667.4 635.6,968.8 475.8,881.1"/></clipPath>
<clipPath id="opLR"><polygon points="657.0,679.8 879.3,765.1 866.6,1095.6 665.4,985.2"/></clipPath>
<linearGradient id="gfade" x1="0" y1="103" x2="0" y2="330" gradientUnits="userSpaceOnUse"><stop offset="0" stop-color="#fff" stop-opacity="0.3"/><stop offset="0.25" stop-color="#fff" stop-opacity="0.55"/><stop offset="1" stop-color="#fff" stop-opacity="1"/></linearGradient><mask id="gmask" maskUnits="userSpaceOnUse" x="0" y="0" width="2000" height="1004"><rect x="0" y="0" width="2000" height="1004" fill="url(#gfade)"/></mask>
</defs>
<g clip-path="url(#vclip)">
<rect x="46" y="103" width="1395" height="871" fill="url(#vbg)"/>
<g stroke="#fff" stroke-width="1" mask="url(#gmask)"><line x1="44.0" y1="102.5" x2="66.8" y2="101.0" stroke-opacity="0.04"/><line x1="44.0" y1="105.7" x2="116.5" y2="101.0" stroke-opacity="0.04"/><line x1="44.0" y1="109.2" x2="166.1" y2="101.0" stroke-opacity="0.04"/><line x1="44.0" y1="112.9" x2="215.8" y2="101.0" stroke-opacity="0.13"/><line x1="44.0" y1="116.8" x2="265.5" y2="101.0" stroke-opacity="0.04"/><line x1="44.0" y1="120.9" x2="315.1" y2="101.0" stroke-opacity="0.04"/><line x1="44.0" y1="125.3" x2="364.8" y2="101.0" stroke-opacity="0.04"/><line x1="44.0" y1="130.0" x2="414.5" y2="101.0" stroke-opacity="0.04"/><line x1="44.0" y1="135.0" x2="464.1" y2="101.0" stroke-opacity="0.04"/><line x1="44.0" y1="140.4" x2="513.8" y2="101.0" stroke-opacity="0.04"/><line x1="44.0" y1="146.1" x2="563.5" y2="101.0" stroke-opacity="0.04"/><line x1="44.0" y1="152.3" x2="613.1" y2="101.0" stroke-opacity="0.04"/><line x1="44.0" y1="158.9" x2="662.8" y2="101.0" stroke-opacity="0.04"/><line x1="44.0" y1="166.1" x2="712.5" y2="101.0" stroke-opacity="0.13"/><line x1="44.0" y1="173.9" x2="762.1" y2="101.0" stroke-opacity="0.06"/><line x1="44.0" y1="182.4" x2="811.8" y2="101.0" stroke-opacity="0.06"/><line x1="44.0" y1="191.7" x2="861.5" y2="101.0" stroke-opacity="0.06"/><line x1="44.0" y1="201.9" x2="911.1" y2="101.0" stroke-opacity="0.06"/><line x1="44.0" y1="213.1" x2="960.8" y2="101.0" stroke-opacity="0.06"/><line x1="44.0" y1="225.5" x2="1010.5" y2="101.0" stroke-opacity="0.06"/><line x1="44.0" y1="239.3" x2="1060.1" y2="101.0" stroke-opacity="0.06"/><line x1="44.0" y1="254.8" x2="1109.8" y2="101.0" stroke-opacity="0.06"/><line x1="44.0" y1="272.3" x2="1159.5" y2="101.0" stroke-opacity="0.06"/><line x1="44.0" y1="292.2" x2="1209.1" y2="101.0" stroke-opacity="0.13"/><line x1="44.0" y1="314.9" x2="1258.8" y2="101.0" stroke-opacity="0.06"/><line x1="44.0" y1="341.3" x2="1308.4" y2="101.0" stroke-opacity="0.06"/><line x1="44.0" y1="372.3" x2="1358.1" y2="101.0" stroke-opacity="0.06"/><line x1="44.0" y1="409.0" x2="1407.8" y2="101.0" stroke-opacity="0.06"/><line x1="44.0" y1="453.4" x2="1443.0" y2="104.6" stroke-opacity="0.06"/><line x1="44.0" y1="508.1" x2="1443.0" y2="118.8" stroke-opacity="0.06"/><line x1="44.0" y1="577.1" x2="1443.0" y2="136.8" stroke-opacity="0.06"/><line x1="44.0" y1="666.9" x2="1443.0" y2="160.2" stroke-opacity="0.06"/><line x1="44.0" y1="710.9" x2="482.7" y2="976.0" stroke-opacity="0.06"/><line x1="44.0" y1="788.7" x2="1443.0" y2="191.9" stroke-opacity="0.06"/><line x1="44.0" y1="534.2" x2="1009.2" y2="976.0" stroke-opacity="0.06"/><line x1="44.0" y1="963.1" x2="1443.0" y2="237.3" stroke-opacity="0.13"/><line x1="44.0" y1="426.4" x2="1443.0" y2="941.8" stroke-opacity="0.13"/><line x1="433.5" y1="976.0" x2="1443.0" y2="307.8" stroke-opacity="0.06"/><line x1="44.0" y1="353.8" x2="1443.0" y2="785.1" stroke-opacity="0.06"/><line x1="847.8" y1="976.0" x2="1443.0" y2="432.0" stroke-opacity="0.06"/><line x1="44.0" y1="301.6" x2="1443.0" y2="672.4" stroke-opacity="0.06"/><line x1="1262.0" y1="976.0" x2="1443.0" y2="708.9" stroke-opacity="0.06"/><line x1="44.0" y1="262.3" x2="1443.0" y2="587.4" stroke-opacity="0.06"/><line x1="44.0" y1="231.5" x2="1443.0" y2="521.0" stroke-opacity="0.06"/><line x1="44.0" y1="206.9" x2="1443.0" y2="467.8" stroke-opacity="0.06"/><line x1="44.0" y1="186.6" x2="1443.0" y2="424.1" stroke-opacity="0.06"/><line x1="44.0" y1="169.7" x2="1443.0" y2="387.6" stroke-opacity="0.06"/><line x1="44.0" y1="155.4" x2="1443.0" y2="356.7" stroke-opacity="0.06"/><line x1="44.0" y1="143.1" x2="1443.0" y2="330.1" stroke-opacity="0.06"/><line x1="44.0" y1="132.5" x2="1443.0" y2="307.1" stroke-opacity="0.13"/><line x1="44.0" y1="123.1" x2="1443.0" y2="286.9" stroke-opacity="0.06"/><line x1="44.0" y1="114.9" x2="1443.0" y2="269.1" stroke-opacity="0.06"/><line x1="44.0" y1="107.5" x2="1443.0" y2="253.3" stroke-opacity="0.06"/><line x1="44.4" y1="101.0" x2="1443.0" y2="239.1" stroke-opacity="0.06"/><line x1="107.6" y1="101.0" x2="1443.0" y2="226.3" stroke-opacity="0.06"/><line x1="170.7" y1="101.0" x2="1443.0" y2="214.7" stroke-opacity="0.06"/><line x1="233.8" y1="101.0" x2="1443.0" y2="204.2" stroke-opacity="0.06"/><line x1="296.9" y1="101.0" x2="1443.0" y2="194.6" stroke-opacity="0.06"/><line x1="360.0" y1="101.0" x2="1443.0" y2="185.8" stroke-opacity="0.06"/><line x1="423.1" y1="101.0" x2="1443.0" y2="177.6" stroke-opacity="0.13"/><line x1="486.3" y1="101.0" x2="1443.0" y2="170.2" stroke-opacity="0.04"/><line x1="549.4" y1="101.0" x2="1443.0" y2="163.2" stroke-opacity="0.04"/><line x1="612.5" y1="101.0" x2="1443.0" y2="156.8" stroke-opacity="0.04"/><line x1="675.6" y1="101.0" x2="1443.0" y2="150.8" stroke-opacity="0.04"/><line x1="738.7" y1="101.0" x2="1443.0" y2="145.1" stroke-opacity="0.04"/><line x1="801.9" y1="101.0" x2="1443.0" y2="139.9" stroke-opacity="0.04"/><line x1="865.0" y1="101.0" x2="1443.0" y2="135.0" stroke-opacity="0.04"/><line x1="928.1" y1="101.0" x2="1443.0" y2="130.4" stroke-opacity="0.04"/><line x1="991.2" y1="101.0" x2="1443.0" y2="126.0" stroke-opacity="0.04"/><line x1="1054.3" y1="101.0" x2="1443.0" y2="121.9" stroke-opacity="0.13"/><line x1="1117.4" y1="101.0" x2="1443.0" y2="118.0" stroke-opacity="0.04"/><line x1="1180.6" y1="101.0" x2="1443.0" y2="114.3" stroke-opacity="0.04"/><line x1="1243.7" y1="101.0" x2="1443.0" y2="110.9" stroke-opacity="0.04"/><line x1="1306.8" y1="101.0" x2="1443.0" y2="107.6" stroke-opacity="0.04"/><line x1="1369.9" y1="101.0" x2="1443.0" y2="104.4" stroke-opacity="0.04"/><line x1="1433.0" y1="101.0" x2="1443.0" y2="101.5" stroke-opacity="0.04"/></g>
<line x1="648.9" y1="649.3" x2="591.5" y2="-1308.7" stroke="#62b57e" stroke-width="1.5"/>
<line x1="648.9" y1="649.3" x2="3059.9" y2="1537.5" stroke="#b8524c" stroke-width="1.1"/>
<line x1="648.9" y1="649.3" x2="1189.9" y2="368.6" stroke="#4a78c4" stroke-width="1.3"/>
<polyline points="1157.7,369 1191.4,368.3 1206,377.7" fill="none" stroke="#4a78c4" stroke-width="1.3"/>
<g><polygon points="945.0,249.8 971.8,242.5 921.1,1131.0 899.6,1155.4" fill="#6c6c6c" /><polygon points="382.8,178.3 413.8,174.4 971.8,242.5 945.0,249.8" fill="#7d8696" /><polygon points="404.1,201.0 922.6,273.5 884.6,1123.5 465.1,889.5" fill="#919191" /><polygon points="398.9,201.7 404.1,201.0 465.1,889.5 460.9,892.0" fill="#818996" /><polygon points="460.9,892.0 465.1,889.5 884.6,1123.5 880.9,1127.5" fill="#818996" /><g clip-path="url(#opUL)"><polygon points="420.1,225.0 609.5,254.1 623.2,628.1 448.9,565.1" fill="#616877" /><polygon points="425.9,224.1 615.2,252.9 628.3,625.6 454.1,563.0" fill="#939393" /></g><g clip-path="url(#opUR)"><polygon points="645.6,259.6 897.2,298.3 880.9,721.4 655.9,640.0" fill="#616877" /><polygon points="651.2,258.4 902.3,296.7 885.6,718.1 661.0,637.4" fill="#939393" /></g><g clip-path="url(#opLL)"><polygon points="452.0,601.2 624.6,667.4 635.6,968.8 475.8,881.1" fill="#616877" /><polygon points="457.1,599.1 629.6,664.8 640.2,965.4 480.4,878.2" fill="#939393" /></g><g clip-path="url(#opLR)"><polygon points="657.0,679.8 879.3,765.1 866.6,1095.6 665.4,985.2" fill="#616877" /><polygon points="662.0,677.1 883.9,761.7 870.8,1091.2 669.9,981.6" fill="#939393" /></g><g stroke="#6482b8" stroke-width="1" stroke-opacity="0.75"><line x1="404.1" y1="201.0" x2="922.6" y2="273.5"/><line x1="404.1" y1="201.0" x2="465.1" y2="889.5"/><line x1="465.1" y1="889.5" x2="884.6" y2="1123.5"/><line x1="922.6" y1="273.5" x2="884.6" y2="1123.5"/><line x1="437.5" y1="578.4" x2="901.2" y2="751.3"/><line x1="626.6" y1="232.1" x2="650.9" y2="993.1"/><line x1="420.1" y1="225.0" x2="609.5" y2="254.1"/><line x1="609.5" y1="254.1" x2="623.2" y2="628.1"/><line x1="623.2" y1="628.1" x2="448.9" y2="565.1"/><line x1="448.9" y1="565.1" x2="420.1" y2="225.0"/><line x1="645.6" y1="259.6" x2="897.2" y2="298.3"/><line x1="897.2" y1="298.3" x2="880.9" y2="721.4"/><line x1="880.9" y1="721.4" x2="655.9" y2="640.0"/><line x1="655.9" y1="640.0" x2="645.6" y2="259.6"/><line x1="452.0" y1="601.2" x2="624.6" y2="667.4"/><line x1="624.6" y1="667.4" x2="635.6" y2="968.8"/><line x1="635.6" y1="968.8" x2="475.8" y2="881.1"/><line x1="475.8" y1="881.1" x2="452.0" y2="601.2"/><line x1="657.0" y1="679.8" x2="879.3" y2="765.1"/><line x1="879.3" y1="765.1" x2="866.6" y2="1095.6"/><line x1="866.6" y1="1095.6" x2="665.4" y2="985.2"/><line x1="665.4" y1="985.2" x2="657.0" y2="679.8"/><line x1="465.1" y1="889.5" x2="475.8" y2="881.1"/><line x1="640.0" y1="653.9" x2="624.6" y2="667.4"/><line x1="437.5" y1="578.4" x2="452.0" y2="601.2"/><line x1="650.9" y1="993.1" x2="635.6" y2="968.8"/><line x1="404.1" y1="201.0" x2="420.1" y2="225.0"/><line x1="640.0" y1="653.9" x2="623.2" y2="628.1"/><line x1="437.5" y1="578.4" x2="448.9" y2="565.1"/><line x1="626.6" y1="232.1" x2="609.5" y2="254.1"/><line x1="884.6" y1="1123.5" x2="866.6" y2="1095.6"/><line x1="640.0" y1="653.9" x2="657.0" y2="679.8"/><line x1="901.2" y1="751.3" x2="879.3" y2="765.1"/><line x1="650.9" y1="993.1" x2="665.4" y2="985.2"/><line x1="922.6" y1="273.5" x2="897.2" y2="298.3"/><line x1="640.0" y1="653.9" x2="655.9" y2="640.0"/><line x1="901.2" y1="751.3" x2="880.9" y2="721.4"/><line x1="626.6" y1="232.1" x2="645.6" y2="259.6"/><line x1="949.6" y1="248.5" x2="903.2" y2="1151.3"/><line x1="388.1" y1="177.6" x2="949.6" y2="248.5"/><line x1="952.6" y1="247.7" x2="905.6" y2="1148.5"/><line x1="391.6" y1="177.2" x2="952.6" y2="247.7"/><line x1="971.8" y1="242.5" x2="921.1" y2="1131.0"/><line x1="413.8" y1="174.4" x2="971.8" y2="242.5"/><line x1="382.8" y1="178.3" x2="413.8" y2="174.4"/><line x1="945.0" y1="249.8" x2="971.8" y2="242.5"/></g><g clip-path="url(#opUL)"><polyline points="425.9,224.1 615.2,252.9 628.3,625.6 454.1,563.0 425.9,224.1" fill="none" stroke="#6482b8" stroke-width="1" /></g><g clip-path="url(#opUR)"><polyline points="651.2,258.4 902.3,296.7 885.6,718.1 661.0,637.4 651.2,258.4" fill="none" stroke="#6482b8" stroke-width="1" /></g><g clip-path="url(#opLL)"><polyline points="457.1,599.1 629.6,664.8 640.2,965.4 480.4,878.2 457.1,599.1" fill="none" stroke="#6482b8" stroke-width="1" /></g><g clip-path="url(#opLR)"><polyline points="662.0,677.1 883.9,761.7 870.8,1091.2 669.9,981.6 662.0,677.1" fill="none" stroke="#6482b8" stroke-width="1" /></g><path d="M382.8,178.3 L945.0,249.8 L899.6,1155.4 L450.2,899.7 Z M398.9,201.7 L918.0,274.8 L880.9,1127.5 L460.9,892.0 Z" fill="#a69b85" fill-rule="evenodd"/><g stroke="#f2a650" stroke-width="1.2"><line x1="382.8" y1="178.3" x2="945.0" y2="249.8"/><line x1="398.9" y1="201.7" x2="918.0" y2="274.8"/><line x1="945.0" y1="249.8" x2="899.6" y2="1155.4"/><line x1="918.0" y1="274.8" x2="880.9" y2="1127.5"/><line x1="899.6" y1="1155.4" x2="450.2" y2="899.7"/><line x1="880.9" y1="1127.5" x2="460.9" y2="892.0"/><line x1="450.2" y1="899.7" x2="382.8" y2="178.3"/><line x1="460.9" y1="892.0" x2="398.9" y2="201.7"/><line x1="382.8" y1="178.3" x2="398.9" y2="201.7"/><line x1="945.0" y1="249.8" x2="918.0" y2="274.8"/><line x1="899.6" y1="1155.4" x2="880.9" y2="1127.5"/><line x1="450.2" y1="899.7" x2="460.9" y2="892.0"/><line x1="620.7" y1="208.5" x2="621.5" y2="233.1"/><line x1="647.4" y1="1011.9" x2="646.9" y2="996.3"/><line x1="419.9" y1="575.3" x2="432.9" y2="580.2"/><line x1="919.3" y1="762.6" x2="897.2" y2="754.3"/></g></g>
<g clip-path="url(#doorclip)" stroke="#222" stroke-opacity="0.75" stroke-width="1"><line x1="44.0" y1="453.4" x2="74.5" y2="445.8"/><line x1="44.0" y1="508.1" x2="156.8" y2="476.7"/><line x1="44.0" y1="577.1" x2="250.9" y2="512.0"/><line x1="44.0" y1="666.9" x2="359.4" y2="552.7"/><line x1="44.0" y1="710.9" x2="482.7" y2="976.0"/><line x1="44.0" y1="788.7" x2="486.0" y2="600.1"/><line x1="44.0" y1="534.2" x2="1009.2" y2="976.0"/><line x1="44.0" y1="963.1" x2="635.6" y2="656.2"/><line x1="433.5" y1="976.0" x2="815.0" y2="723.5"/><line x1="847.8" y1="976.0" x2="1034.1" y2="805.7"/><line x1="1262.0" y1="976.0" x2="1307.9" y2="908.3"/></g>
<rect x="627.4" y="653.3" width="7.6" height="9.9" fill="none" stroke="#777" stroke-width="0.8" opacity="0.6"/><line x1="632.9" y1="619.4" x2="630" y2="536" stroke="#62e07d" stroke-width="1.6"/><polygon points="629.1,512 623.7,536.3 635.7,535.2" fill="#62e07d"/><line x1="666.4" y1="670.4" x2="736" y2="696" stroke="#e8463c" stroke-width="1.5"/><polygon points="755.1,703.3 736.9,691.7 734,701.1" fill="#e8463c"/><line x1="663.5" y1="642.4" x2="716" y2="613.5" stroke="#3f86ee" stroke-width="1.5"/><polygon points="730.8,607.3 714.3,610.3 719.4,619.6" fill="#3f86ee"/><polygon points="682.1,549.3 693.1,544.9 693.1,559.6" fill="#e8463c" fill-opacity="0.25"/><polyline points="669,554.1 693.1,544.5 693.8,576.7" fill="none" stroke="#e8463c" stroke-width="1"/><line x1="682.1" y1="549.3" x2="693.1" y2="559.6" stroke="#e8463c" stroke-width="0.9"/><polygon points="689.8,592 705.1,596 704.7,611.7" fill="#a9c6ee" fill-opacity="0.8"/><polyline points="674.5,586.1 689.8,592 705.1,596 705.1,631.4" fill="none" stroke="#3f86ee" stroke-width="1"/><line x1="689.8" y1="592" x2="704.7" y2="611.7" stroke="#3f86ee" stroke-width="0.9"/><polyline points="735.8,640.6 764.3,650.7 742.4,663.9" fill="none" stroke="#62e07d" stroke-width="1"/><line x1="750.1" y1="645.7" x2="756.6" y2="657.3" stroke="#62e07d" stroke-width="0.9"/>
<rect x="46" y="103" width="1395" height="43" fill="#000" fill-opacity="0.22"/>
<rect x="46" y="930" width="1395" height="44" fill="#000" fill-opacity="0.27"/>
</g>
<line x1="1012" y1="213.5" x2="938" y2="261.5" stroke="#e9432a" stroke-width="6.5"/><polygon points="921.5,272 935.5,247.5 950,268.8" fill="#e9432a"/><line x1="83.3" y1="916.8" x2="83.3" y2="935.5" stroke="#0c1a10" stroke-width="1.4"/><line x1="84.6" y1="916.8" x2="84.6" y2="935.5" stroke="#b5dbbd" stroke-width="1.8"/><line x1="84.5" y1="935.2" x2="96.6" y2="929.4" stroke="#5b8fdc" stroke-width="1.6"/><line x1="84.5" y1="935.3" x2="99.8" y2="940" stroke="#dc5a5a" stroke-width="1.6"/><text x="84.2" y="910.6" font-family="Liberation Sans,sans-serif" font-weight="bold" font-size="11" text-anchor="middle" fill="#6fce82">Y</text><text x="104.6" y="929.5" font-family="Liberation Sans,sans-serif" font-weight="bold" font-size="11" text-anchor="middle" fill="#5c8cd6">Z</text><text x="109.2" y="947" font-family="Liberation Sans,sans-serif" font-weight="bold" font-size="11" text-anchor="middle" fill="#d9534f">X</text>
</svg><div class="abs" style="left:47px;top:105px;width:30px;height:17px;background:rgba(0,0,0,0.12);border-radius:2px"></div><div class="t " style="left:51px;top:106px;color:#e0e0e0">透視</div><div class="abs" style="left:683px;top:105px;width:116px;height:17px;background:rgba(0,0,0,0.12);border-radius:2px"></div><div class="t " style="left:686px;top:106px;color:#e0e0e0">デフォルトカメラ</div><svg class="abs" style="left:780px;top:106px" width="20" height="16" viewBox="780 106 20 16"><rect x="783.5" y="113.5" width="9" height="5.3" fill="#151515"/><polygon points="793.5,115.5 797,113.7 797,118.7 793.5,117.3" fill="#151515"/><circle cx="785" cy="110.8" r="2.3" fill="#c8dcf4" stroke="#111" stroke-width="0.8"/><circle cx="790.6" cy="110.3" r="2.7" fill="#c8dcf4" stroke="#111" stroke-width="0.8"/><rect x="784.3" y="115" width="2.8" height="2.3" fill="#c8dcf4"/></svg><div class="abs" style="left:48px;top:137px;width:113px;height:44px;background:rgba(0,0,0,0.16);border-radius:2px"></div><div class="t " style="left:106px;top:138px;color:#e0e0e0">選択&nbsp; 合計</div><div class="t " style="left:51px;top:160px;color:#e0e0e0">ポリゴン</div><div class="t " style="left:106px;top:160px;color:#e0e0e0">8</div><div class="abs" style="left:1298px;top:953px;width:124px;height:18px;background:rgba(0,0,0,0.12);border-radius:2px"></div><div class="t " style="left:1302px;top:954px;color:#e4e4e4;font-size:12px">グリッド間隔 : 50 cm</div><div class="abs" style="left:45px;top:982px;width:5px;height:18px;background-image:radial-gradient(circle,#5a5a5a 0.8px,transparent 1px);background-size:3px 3px"></div><div class="btn" style="left:54px;width:70px;border-radius:3px 0 0 3px">ライブ選択</div><div class="btn" style="left:129px;width:72px;border-radius:3px 0 0 3px">ループ選択</div><div class="btn" style="left:201.5px;width:72.5px;border-radius:0">リング選択</div><div class="btn" style="left:274.5px;width:119.5px;border-radius:0 3px 3px 0">シャープエッジ選択</div><div class="btn" style="left:399px;width:58.5px;border-radius:3px">全て反転</div><div class="btn" style="left:462.5px;width:107.5px;border-radius:3px 0 0 3px">選択範囲を拡大...</div><div class="btn" style="left:570.5px;width:96px;border-radius:0">選択範囲を縮小</div><div class="btn" style="left:667px;width:153px;border-radius:0">連続したエレメントを選択</div><div class="btn" style="left:820.5px;width:105.5px;border-radius:0 3px 3px 0"></div><div class="btn" style="left:927.6px;width:128.4px;border-radius:3px 0 0 3px">選択エレメントを隠す</div><div class="btn" style="left:1056.5px;width:152.5px;border-radius:0">選択エレメント以外を隠す</div><div class="btn" style="left:1209.5px;width:61.9px;border-radius:0 3px 3px 0">全て表示</div><div class="btn" style="left:1275.6px;width:95.4px;border-radius:3px">選択範囲を記録</div><div class="btn" style="left:1375px;width:72px;border-radius:3px 0 0 3px"></div><div class="t y" style="left:829px;top:983px">ミラー選択...</div><div class="t" style="left:1382px;top:983px;width:60px;overflow:hidden">選択範囲を変換</div><svg class="abs" style="left:119px;top:997px" width="5" height="5"><path d="M5 0 V5 H0 Z" fill="#1c1c1c"/></svg><svg class="abs" style="left:902px;top:980px" width="22" height="22" viewBox="902 980 22 22"><rect x="-1.728" y="-7.2" width="3.456" height="3.6" fill="#1c1c1c" transform="translate(912.5 991) rotate(0)"/><rect x="-1.728" y="-7.2" width="3.456" height="3.6" fill="#1c1c1c" transform="translate(912.5 991) rotate(45)"/><rect x="-1.728" y="-7.2" width="3.456" height="3.6" fill="#1c1c1c" transform="translate(912.5 991) rotate(90)"/><rect x="-1.728" y="-7.2" width="3.456" height="3.6" fill="#1c1c1c" transform="translate(912.5 991) rotate(135)"/><rect x="-1.728" y="-7.2" width="3.456" height="3.6" fill="#1c1c1c" transform="translate(912.5 991) rotate(180)"/><rect x="-1.728" y="-7.2" width="3.456" height="3.6" fill="#1c1c1c" transform="translate(912.5 991) rotate(225)"/><rect x="-1.728" y="-7.2" width="3.456" height="3.6" fill="#1c1c1c" transform="translate(912.5 991) rotate(270)"/><rect x="-1.728" y="-7.2" width="3.456" height="3.6" fill="#1c1c1c" transform="translate(912.5 991) rotate(315)"/><circle cx="912.5" cy="991" r="3.96" fill="none" stroke="#1c1c1c" stroke-width="3.024"/></svg><div class="abs" style="left:1442px;top:975px;width:6px;height:29px;background:#3b3b3b"></div><div class="abs" style="left:1447px;top:32px;width:528px;height:449px;background:#3b3b3b;border:1.5px solid #4b4b4b"></div><div class="abs" style="left:1449px;top:58px;width:524px;height:25px;background:#474747"></div><div class="abs" style="left:1528px;top:58px;width:1px;height:421px;background:#464646"></div><div class="abs" style="left:1572px;top:58px;width:1px;height:421px;background:#464646"></div><div class="abs" style="left:1449px;top:57px;width:524px;height:1px;background:#484848"></div><div class="abs" style="left:1454px;top:40.5px;width:16px;height:2px;background:#9a9a9a;box-shadow:0 4.5px 0 #9a9a9a,0 9px 0 #9a9a9a"></div><div class="t " style="left:1481px;top:36px;">ファイル</div><div class="t " style="left:1542px;top:36px;">編集</div><div class="t " style="left:1581px;top:36px;">表示</div><div class="t " style="left:1620px;top:36px;">オブジェクト</div><div class="t y" style="left:1704px;top:36px;">タグ</div><div class="t " style="left:1743px;top:36px;">ブックマーク</div><div class="t " style="left:1488px;top:64px;color:#f5c04a;font-weight:bold">立方体</div><svg class="abs" style="left:1447px;top:32px" width="530" height="54" viewBox="1447 32 530 54"><path d="M1456.4 61.4 V72.7 H1466.3" fill="none" stroke="#8a8a8a" stroke-width="1.2"/><polygon points="1474.8,67.7 1468.5,78.5 1481.6,78.5" fill="#a8d0f8" stroke="#1a2a3a" stroke-width="0.9"/><circle cx="1474.8" cy="67.7" r="1.8" fill="#fff" stroke="#333" stroke-width="0.4"/><circle cx="1468.5" cy="78.5" r="1.8" fill="#fff" stroke="#333" stroke-width="0.4"/><circle cx="1481.6" cy="78.5" r="1.8" fill="#fff" stroke="#333" stroke-width="0.4"/><rect x="1532" y="65.9" width="13.9" height="15.3" rx="2.5" fill="#8c8c8c"/><line x1="1535" y1="78" x2="1543" y2="69" stroke="#3a3a3a" stroke-width="1.2"/><circle cx="1554" cy="68.6" r="3" fill="#8c8c8c"/><circle cx="1554" cy="77.6" r="3" fill="#8c8c8c"/><defs><radialGradient id="ball" cx="0.35" cy="0.3" r="0.8"><stop offset="0" stop-color="#e8a860"/><stop offset="0.6" stop-color="#c07830"/><stop offset="1" stop-color="#6a3a10"/></radialGradient></defs><circle cx="1579.7" cy="66.8" r="3.8" fill="url(#ball)"/><circle cx="1586.9" cy="75.4" r="4.4" fill="url(#ball)"/><rect x="1598.8" y="64.4" width="14.4" height="17" fill="#fff" stroke="#c8853f" stroke-width="1.5"/><rect x="1599.6" y="70.4" width="4.4" height="5.2" fill="#111"/><rect x="1604" y="65.2" width="4.4" height="5.2" fill="#111"/><rect x="1604" y="75.6" width="4.4" height="5.2" fill="#111"/><rect x="1608.4" y="70.4" width="4.4" height="5.2" fill="#111"/><circle cx="1895.6" cy="41.7" r="4.6" fill="none" stroke="#8e8e8e" stroke-width="1.5"/><line x1="1898.8" y1="45.3" x2="1903.3" y2="52.5" stroke="#8e8e8e" stroke-width="2.2" stroke-linecap="round"/><path d="M1919 37.8 L1927 46 L1924.2 46 L1924.2 52.8 L1913.8 52.8 L1913.8 46 L1911 46 Z" fill="none" stroke="#8e8e8e" stroke-width="1.5" stroke-linejoin="miter"/><path d="M1933.6 37.8 L1948.6 37.8 L1942.4 47.8 L1942.4 50.8 L1939.6 53 L1939.6 47.8 Z" fill="none" stroke="#8e8e8e" stroke-width="1.5"/><rect x="1958.3" y="37.8" width="11.8" height="15" fill="none" stroke="#8e8e8e" stroke-width="1.5"/><path d="M1964.2 43 V49.4 M1961 46.2 H1967.4" stroke="#8e8e8e" stroke-width="2"/></svg><div class="abs" style="left:1447px;top:485px;width:528px;height:520px;background:#3b3b3b;border:1.5px solid #4b4b4b"></div><div class="abs" style="left:1454px;top:491.8px;width:16px;height:2.3px;background:#9a9a9a;box-shadow:0 4.5px 0 #9a9a9a,0 9px 0 #9a9a9a"></div><div class="t " style="left:1481px;top:488px;">モード</div><div class="t " style="left:1531px;top:488px;">編集</div><div class="t " style="left:1571px;top:488px;">ユーザデータ</div><div class="abs" style="left:1449px;top:509.5px;width:524px;height:1px;background:#484848"></div><div class="t " style="left:1479px;top:518px;color:#e6e6e6">押し出し</div><div class="hl" style="left:1451px;top:542px;width:131px;height:19px;border-radius:3px"></div><div class="abs" style="left:1516px;top:542px;width:1px;height:19px;background:#6f88b8"></div><div class="t " style="left:1454px;top:544px;color:#1c1c1c">オプション</div><div class="t " style="left:1531px;top:544px;color:#1c1c1c">ツール</div><div class="t b" style="left:1452px;top:569px;">オプション</div><div class="t " style="left:1476.5px;top:593px;">押し出し量</div><div class="fld" style="left:1595.5px;top:592px;width:92.5px;background:#2b2b2b;color:#e8e8e8">1.5 cm</div><svg class="abs" style="left:1678px;top:594px" width="8" height="14"><path d="M1 5 L4 2 L7 5 M1 9 L4 12 L7 9" fill="none" stroke="#9a9a9a" stroke-width="1"/></svg><div class="sld" style="left:1688px;top:592px;width:282px;background:#2b2b2b"><div class="fill" style="width:143px;background:#6a6a6a"></div><div class="hnd" style="left:142px;background:#8ea8da"></div></div><div class="t " style="left:1476.5px;top:616.7px;">押し出し量のばらつき</div><div class="fld" style="left:1595.5px;top:615.7px;width:92.5px;background:#2b2b2b;color:#e8e8e8">0 %</div><svg class="abs" style="left:1678px;top:617.7px" width="8" height="14"><path d="M1 5 L4 2 L7 5 M1 9 L4 12 L7 9" fill="none" stroke="#9a9a9a" stroke-width="1"/></svg><div class="sld" style="left:1688px;top:615.7px;width:282px;background:#2b2b2b"><div class="fill" style="width:1px;background:#6a6a6a"></div><div class="hnd" style="left:0px;background:#8ea8da"></div></div><div class="t " style="left:1476.5px;top:640px;">分割数</div><div class="fld" style="left:1595.5px;top:639px;width:92.5px;background:#2b2b2b;color:#e8e8e8">0</div><svg class="abs" style="left:1678px;top:641px" width="8" height="14"><path d="M1 5 L4 2 L7 5 M1 9 L4 12 L7 9" fill="none" stroke="#9a9a9a" stroke-width="1"/></svg><div class="sld" style="left:1688px;top:639px;width:282px;background:#2b2b2b"><div class="fill" style="width:1px;background:#6a6a6a"></div><div class="hnd" style="left:0px;background:#8ea8da"></div></div><div class="t dis" style="left:1476.5px;top:662.4px;">N-gonsを作成</div><div class="cb" style="left:1595.5px;top:663.5px;border-color:#555"></div><div class="t " style="left:1476.5px;top:683.4px;">グループを維持</div><div class="cb on" style="left:1595.5px;top:684.5px"></div><svg class="abs" style="left:1595.5px;top:684.5px" width="14" height="14"><path d="M3 7.2 L6 10 L11 3.8" fill="none" stroke="#222" stroke-width="1.8"/></svg><div class="hdr" style="top:705.5px"></div><svg class="abs" style="left:1462px;top:711px" width="8" height="6"><path d="M0 0 L8 0 L4 5.5 Z" fill="#e0e0e0"/></svg><div class="t b" style="left:1472px;top:706px;color:#e6e6e6">ポリゴン</div><div class="t " style="left:1486px;top:727.4px;">キャップを作成</div><div class="cb" style="left:1570.5px;top:728.5px"></div><div class="t " style="left:1486px;top:750.2px;">最大角度</div><div class="fld" style="left:1571px;top:749.2px;width:92px;background:#2b2b2b;color:#e8e8e8">91 °</div><svg class="abs" style="left:1653px;top:751.2px" width="8" height="14"><path d="M1 5 L4 2 L7 5 M1 9 L4 12 L7 9" fill="none" stroke="#9a9a9a" stroke-width="1"/></svg><div class="sld" style="left:1663px;top:749.2px;width:298px;background:#2b2b2b"><div class="fill" style="width:151px;background:#6a6a6a"></div><div class="hnd" style="left:150px;background:#8ea8da"></div></div><div class="hdr" style="top:777.5px"></div><svg class="abs" style="left:1462px;top:783px" width="8" height="6"><path d="M0 0 L8 0 L4 5.5 Z" fill="#e0e0e0"/></svg><div class="t b" style="left:1472px;top:778.3px;color:#e6e6e6">エッジ</div><div class="t dis" style="left:1486px;top:801.5px;">回転</div><div class="fld" style="left:1559px;top:800.5px;width:91.5px;background:#333;color:#777">0 °</div><svg class="abs" style="left:1640.5px;top:802.5px" width="8" height="14"><path d="M1 5 L4 2 L7 5 M1 9 L4 12 L7 9" fill="none" stroke="#5e5e5e" stroke-width="1"/></svg><div class="sld" style="left:1650.5px;top:800.5px;width:310.5px;background:#333"><div class="fill" style="width:156.5px;background:#4a4a4a"></div><div class="hnd" style="left:155.5px;background:#5d6b8c"></div></div><div class="t dis" style="left:1486px;top:823.8px;">回転の量子化</div><div class="cb on" style="left:1558.5px;top:824.5px;background:#9a9a9a;border-color:#9a9a9a"></div><svg class="abs" style="left:1558.5px;top:824.5px" width="14" height="14"><path d="M3 7.2 L6 10 L11 3.8" fill="none" stroke="#222" stroke-width="1.8"/></svg><div class="t dis" style="left:1486px;top:846.2px;">角度</div><div class="fld" style="left:1559px;top:845.2px;width:91.5px;background:#333;color:#777">5 °</div><svg class="abs" style="left:1640.5px;top:847.2px" width="8" height="14"><path d="M1 5 L4 2 L7 5 M1 9 L4 12 L7 9" fill="none" stroke="#5e5e5e" stroke-width="1"/></svg><div class="sld" style="left:1650.5px;top:845.2px;width:310.5px;background:#333"><div class="fill" style="width:10.5px;background:#4a4a4a"></div><div class="hnd" style="left:9.5px;background:#5d6b8c"></div></div><div class="hdr" style="top:874px"></div><svg class="abs" style="left:1462px;top:879.5px" width="8" height="6"><path d="M0 0 L8 0 L4 5.5 Z" fill="#e0e0e0"/></svg><div class="t b" style="left:1472px;top:874.7px;color:#e6e6e6">ポイント</div><div class="t dis" style="left:1486px;top:897.7px;">ベベル</div><div class="fld" style="left:1583px;top:896.7px;width:91.5px;background:#333;color:#777">5 cm</div><svg class="abs" style="left:1664.5px;top:898.7px" width="8" height="14"><path d="M1 5 L4 2 L7 5 M1 9 L4 12 L7 9" fill="none" stroke="#5e5e5e" stroke-width="1"/></svg><div class="sld" style="left:1674.5px;top:896.7px;width:286.5px;background:#333"><div class="fill" style="width:150.5px;background:#4a4a4a"></div><div class="hnd" style="left:149.5px;background:#5d6b8c"></div></div><div class="t dis" style="left:1486px;top:921px;">ベベルのばらつき</div><div class="fld" style="left:1583px;top:920px;width:91.5px;background:#333;color:#777">0 %</div><svg class="abs" style="left:1664.5px;top:922px" width="8" height="14"><path d="M1 5 L4 2 L7 5 M1 9 L4 12 L7 9" fill="none" stroke="#5e5e5e" stroke-width="1"/></svg><div class="sld" style="left:1674.5px;top:920px;width:286.5px;background:#333"><div class="fill" style="width:1.5px;background:#4a4a4a"></div><div class="hnd" style="left:0.5px;background:#5d6b8c"></div></div><div class="t b" style="left:1452px;top:950.7px;">ツール</div><div class="t " style="left:1478px;top:973px;">リアルタイムに更新</div><div class="cb on" style="left:1584px;top:974px"></div><svg class="abs" style="left:1584px;top:974px" width="14" height="14"><path d="M3 7.2 L6 10 L11 3.8" fill="none" stroke="#222" stroke-width="1.8"/></svg><div class="abs" style="left:1464px;top:994px;width:59.5px;height:20px;background:#5a5a5a;border-radius:3px;text-align:center;line-height:18px;color:#e0e0e0">適用</div><div class="abs" style="left:1539px;top:994px;width:81.5px;height:20px;background:#5a5a5a;border-radius:3px;text-align:center;line-height:18px;color:#e0e0e0">新規に変換</div><div class="abs" style="left:1636px;top:994px;width:93px;height:20px;background:#5a5a5a;border-radius:3px;text-align:center;line-height:18px;color:#e0e0e0">値をリセット</div><div class="t " style="right:413px;top:593px;letter-spacing:0.38px">. . . . . . . .</div><div class="t " style="right:413px;top:640px;letter-spacing:0.38px">. . . . . . . . . . .</div><div class="t dis" style="right:413px;top:662.4px;letter-spacing:0.38px">. . . .</div><div class="t " style="right:413px;top:683.4px;letter-spacing:0.38px">. . . .</div><div class="t " style="right:437.9px;top:750.2px;letter-spacing:0.38px">. . . .</div><div class="t dis" style="right:453.6px;top:801.5px;letter-spacing:0.38px">. . . . .</div><div class="t dis" style="right:453.6px;top:846.2px;letter-spacing:0.38px">. . . . .</div><div class="t dis" style="right:428.4px;top:897.7px;letter-spacing:0.38px">. . . . . . . .</div><div class="abs" style="left:1830px;top:629.7px;width:1px;height:4px;background:#4a4a4a"></div><div class="abs" style="left:1830px;top:653px;width:1px;height:4px;background:#4a4a4a"></div><div class="abs" style="left:1806.5px;top:859.2px;width:1px;height:4px;background:#4a4a4a"></div><div class="abs" style="left:1818px;top:934px;width:1px;height:4px;background:#4a4a4a"></div><div class="abs" style="left:1465px;top:583px;width:239px;height:33px;border:3.2px solid #e5432d"></div><svg class="abs" style="left:1447px;top:485px" width="530" height="56" viewBox="1447 485 530 56"><path d="M1822.5 497.3 H1839.5 M1829.3 490.3 L1822.3 497.3 L1829.3 504.3" fill="none" stroke="#a0a0a0" stroke-width="2.3"/><path d="M1844 497.3 H1860.5 M1853.5 490.5 L1860.5 497.3 L1853.5 504" fill="none" stroke="#5c5c5c" stroke-width="1.6"/><path d="M1874.2 506 V490 M1867.8 496.5 L1874.2 490 L1880.6 496.5" fill="none" stroke="#5c5c5c" stroke-width="1.6"/><circle cx="1895.5" cy="493.7" r="4.7" fill="none" stroke="#8e8e8e" stroke-width="1.5"/><line x1="1898.7" y1="497.3" x2="1903.4" y2="504.3" stroke="#8e8e8e" stroke-width="2.2" stroke-linecap="round"/><rect x="1913.6" y="495.3" width="12" height="9.4" rx="1.5" fill="none" stroke="#8e8e8e" stroke-width="1.5"/><path d="M1916.3 495 V492.3 A3.4 3.4 0 0 1 1923 491.8" fill="none" stroke="#8e8e8e" stroke-width="1.5"/><circle cx="1919.6" cy="500" r="1.3" fill="#8e8e8e"/><circle cx="1941.4" cy="496.9" r="7.8" fill="none" stroke="#8e8e8e" stroke-width="1.3"/><circle cx="1941.4" cy="496.9" r="3" fill="none" stroke="#8e8e8e" stroke-width="1.3"/><rect x="1958.3" y="489" width="11.8" height="16" fill="none" stroke="#8e8e8e" stroke-width="1.5"/><path d="M1964.2 494.3 V500.7 M1961 497.5 H1967.4" stroke="#8e8e8e" stroke-width="2"/><polygon points="1453.2,521.5 1462.0,525.9 1462.0,535.9 1453.8,531.5" fill="#7d7d7d" stroke="#1a1a1a" stroke-width="0.7" stroke-linejoin="round"/><polygon points="1462.0,525.9 1470.8,521.5 1470.2,531.5 1462.0,535.9" fill="#5b5b5b" stroke="#1a1a1a" stroke-width="0.7" stroke-linejoin="round"/><polygon points="1462.0,517.1 1470.8,521.5 1462.0,525.9 1453.2,521.5" fill="#f2a54e" stroke="#1a1a1a" stroke-width="0.7" stroke-linejoin="round"/><polygon points="1453.2,522.1 1462,526.5 1470.8,522.1 1470.8,524.3 1462,528.7 1453.2,524.3" fill="#d98f3c" stroke="#1a1a1a" stroke-width="0.5"/></svg><div class="abs" style="left:1976px;top:29px;width:24px;height:975px;background:#2f2f2f"></div><div class="abs" style="left:1975px;top:29px;width:24px;height:84px;background:#3b3b3b;border-radius:0 4px 4px 0"></div><div class="vt" style="left:1975px;top:38.5px;color:#f0f0f0;font-weight:bold">オブジェクト</div><div class="vt" style="left:1975px;top:120px">テイク</div><div class="vt" style="left:1975px;top:168px">コンテンツブラウザ</div><div class="abs" style="left:1975px;top:483px;width:24px;height:38px;background:#3b3b3b;border-radius:0 4px 4px 0"></div><div class="vt" style="left:1975px;top:490px;color:#f0f0f0;font-weight:bold">属性</div><div class="vt" style="left:1975px;top:528px">レイヤー</div><div class="vt" style="left:1975px;top:586px">構造</div></body></html>
